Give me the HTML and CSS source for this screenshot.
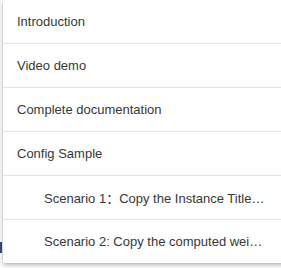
FILE: index.html
```html
<!DOCTYPE html>
<html>
<head>
<meta charset="utf-8">
<link rel="stylesheet" href="styles.css">
</head>
<body>
<div class="page">
  <div class="bg-mark"></div>
  <ul class="menu">
    <li class="item"><span class="label">Introduction</span></li>
    <li class="item"><span class="label">Video demo</span></li>
    <li class="item"><span class="label">Complete documentation</span></li>
    <li class="item"><span class="label">Config Sample</span></li>
    <li class="item sub"><span class="label">Scenario 1：Copy the Instance Title to the target field</span></li>
    <li class="item sub"><span class="label">Scenario 2: Copy the computed weight to the field</span></li>
  </ul>
</div>
</body>
</html>
```

FILE: styles.css
```css
html, body {
  margin: 0;
  padding: 0;
  background: #ffffff;
}
.page {
  position: relative;
  width: 281px;
  height: 268px;
  overflow: hidden;
  background: #ffffff;
}
.bg-mark {
  position: absolute;
  left: 0;
  top: 242px;
  width: 2px;
  height: 11px;
  background: #3b4a78;
}
.menu {
  position: absolute;
  left: 3px;
  top: 0;
  width: 290px;
  margin: 0;
  padding: 0;
  list-style: none;
  background: #ffffff;
  box-shadow: 0 2px 5px rgba(0, 0, 0, 0.28), 0 0 2px rgba(0, 0, 0, 0.12);
  font-family: "Liberation Sans", Arial, "Noto Sans CJK SC", sans-serif;
  font-size: 13px;
  color: #383838;
}
.item {
  display: flex;
  height: 43px;
  align-items: center;
  padding-left: 14px;
  border-bottom: 1px solid #e4e4e4;
}
.item:last-child {
  border-bottom: none;
}
.sub {
  padding-left: 41px;
}
.label {
  display: block;
  max-width: 221px;
  white-space: nowrap;
  overflow: hidden;
  text-overflow: ellipsis;
}
```
